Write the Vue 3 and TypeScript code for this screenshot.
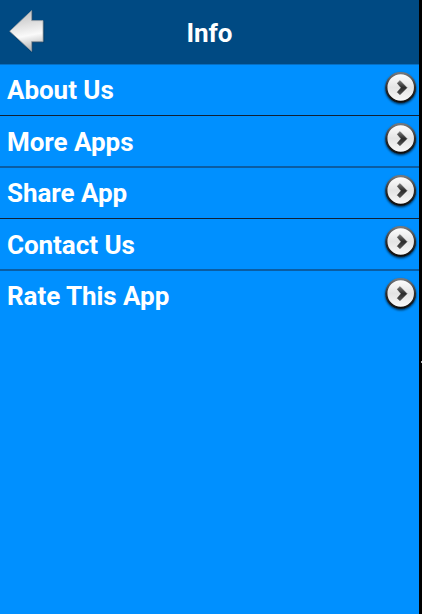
<script setup lang="ts">
interface MenuItem {
  label: string
  rule: 'thin' | 'wide' | 'none'
}

const items: MenuItem[] = [
  { label: 'About Us', rule: 'thin' },
  { label: 'More Apps', rule: 'wide' },
  { label: 'Share App', rule: 'thin' },
  { label: 'Contact Us', rule: 'wide' },
  { label: 'Rate This App', rule: 'none' },
]
</script>

<template>
  <div class="page">
    <main class="screen">
      <header class="bar">
        <svg class="back" width="40" height="48" viewBox="0 0 40 48">
          <defs>
            <linearGradient id="arrowFill" x1="0" y1="0" x2="0.15" y2="1">
              <stop offset="0" stop-color="#bdbdbd" />
              <stop offset="0.35" stop-color="#dadada" />
              <stop offset="0.68" stop-color="#fafafa" />
              <stop offset="1" stop-color="#bcbcbc" />
            </linearGradient>
            <filter id="arrowShade" x="-20%" y="-20%" width="140%" height="140%">
              <feDropShadow dx="0.4" dy="0.4" stdDeviation="0.6" flood-color="#101820" flood-opacity="0.6" />
            </filter>
          </defs>
          <path d="M4.7 25.2 L26.6 4.6 V14.6 H38 V35.6 H26.6 V45.3 Z" fill="url(#arrowFill)" stroke="#959da3" stroke-width="0.7" filter="url(#arrowShade)" />
        </svg>
        <h1 class="title">Info</h1>
      </header>
      <ul class="menu">
        <li v-for="item in items" :key="item.label" class="row" :class="item.rule">
          <span class="label">{{ item.label }}</span>
          <svg class="go" width="36" height="40" viewBox="0 0 36 40">
            <defs>
              <linearGradient id="disc" x1="0" y1="0" x2="0" y2="1">
                <stop offset="0" stop-color="#ffffff" />
                <stop offset="0.5" stop-color="#e4e4e4" />
                <stop offset="1" stop-color="#fafafa" />
              </linearGradient>
              <linearGradient id="ring" x1="0" y1="0" x2="0" y2="1">
                <stop offset="0" stop-color="#74787c" />
                <stop offset="0.5" stop-color="#2c2c2c" />
                <stop offset="1" stop-color="#101010" />
              </linearGradient>
              <linearGradient id="chevron" x1="0" y1="0" x2="0" y2="1">
                <stop offset="0" stop-color="#777777" />
                <stop offset="0.5" stop-color="#2a2a2a" />
                <stop offset="1" stop-color="#555555" />
              </linearGradient>
              <filter id="discShade" x="-20%" y="-20%" width="140%" height="150%">
                <feDropShadow dx="0" dy="1.3" stdDeviation="1.3" flood-color="#000" flood-opacity="0.75" />
              </filter>
            </defs>
            <circle cx="18.7" cy="17.4" r="14.3" fill="url(#disc)" stroke="url(#ring)" stroke-width="2.1" filter="url(#discShade)" />
            <path d="M15.2 13.2 L18 10.5 L25 17.7 L18 24.8 L15.2 22.2 L19 17.7 Z" fill="url(#chevron)" stroke="url(#chevron)" stroke-width="0.5" stroke-linejoin="round" />
          </svg>
        </li>
      </ul>
    </main>
    <aside class="edge"><i class="speck"></i></aside>
  </div>
</template>

<style>
body {
  margin: 0;
}
</style>

<style scoped>
.page {
  display: flex;
  width: 422px;
  height: 614px;
  overflow: hidden;
  background: #000;
  font-family: Roboto, "Liberation Sans", sans-serif;
  color: #fff;
}
.screen {
  width: 419px;
  background: #0090ff;
}
.bar {
  display: grid;
  grid-template-columns: 48px 1fr 48px;
  align-items: center;
  box-sizing: border-box;
  height: 65px;
  background: #004a83;
  border-bottom: 1px solid #0670c4;
}
.back {
  display: block;
  align-self: start;
  margin: 6px 0 0 5px;
}
.title {
  margin: 0;
  padding-top: 2px;
  font-size: 26px;
  line-height: 30px;
  font-weight: 700;
  letter-spacing: -0.05px;
  text-align: center;
}
.menu {
  margin: 0;
  padding: 0;
  list-style: none;
}
.row {
  display: flex;
  justify-content: space-between;
  box-sizing: border-box;
  height: 51px;
  padding: 0 1px 0 7px;
}
.thin {
  border-bottom: 1px solid #102236;
}
.wide {
  height: 52px;
  border-bottom: 2px solid #0a5da3;
}
.label {
  font-size: 26px;
  line-height: 30px;
  font-weight: 700;
  letter-spacing: -0.05px;
  padding-top: 10px;
  white-space: nowrap;
}
.wide .label {
  padding-top: 11px;
}
.go {
  display: block;
  flex: none;
  margin-top: 5px;
}
.edge {
  display: flex;
  justify-content: flex-end;
  width: 3px;
  background: #000;
}
.speck {
  width: 1px;
  height: 2px;
  margin-top: 361px;
  background: #b5b5b5;
}
</style>
